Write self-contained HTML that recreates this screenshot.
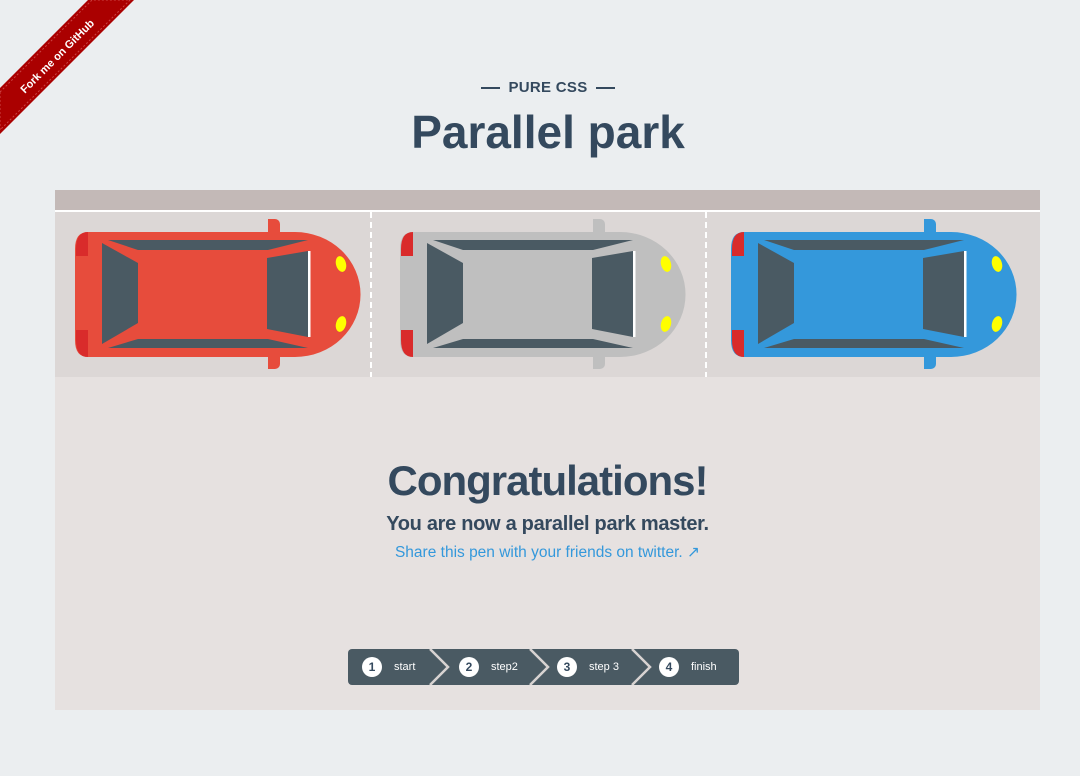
<!DOCTYPE html>
<html><head><meta charset="utf-8"><style>
body{margin:0;width:1080px;height:776px;background:#ebeef0;font-family:"Liberation Sans",sans-serif;position:relative;overflow:hidden}
.sub{position:absolute;top:79px;left:0;width:1096px;text-align:center;color:#34495e;font-weight:bold;font-size:15px;letter-spacing:.3px}
.sub span{display:inline-block;width:19px;height:2px;background:#34495e;vertical-align:middle;margin:0 8px}
h1{position:absolute;top:105px;left:0;width:1096px;text-align:center;margin:0;color:#34495e;font-size:46px;font-weight:bold}
.lot{position:absolute;left:55px;top:190px;width:985px;height:520px;background:#e6e1e0}
.cg{position:absolute;left:0;top:187px;width:985px;text-align:center;color:#34495e}
.steps{position:absolute;left:348px;top:649px;width:391px;height:36px;background:#4a5a63;border-radius:4px}
.st{position:absolute;top:0;height:36px;line-height:36px;color:#fff;font-size:11px}
.st b{display:inline-block;width:20px;height:20px;border-radius:50%;background:#fff;color:#34495e;text-align:center;line-height:20px;font-size:12px;margin-right:12px;vertical-align:middle}
</style></head><body>
<svg style="position:absolute;left:0;top:0" width="140" height="140"><polygon points="0,88 88,0 134,0 0,134" fill="#a00"/><polygon points="0,92 92,0 130,0 0,130" fill="none" stroke="#c44" stroke-dasharray="2 2" stroke-width="1"/><text x="0" y="4" transform="translate(57,56) rotate(-45)" text-anchor="middle" fill="#fff" font-size="11" font-weight="bold" font-family="Liberation Sans">Fork me on GitHub</text></svg>
<div class="sub"><span></span>PURE CSS<span></span></div>
<h1>Parallel park</h1>
<div class="lot">
<svg width="985" height="190" style="position:absolute;left:0;top:0">
<rect width="985" height="20" fill="#c3b9b7"/><rect y="20" width="985" height="2" fill="#fff"/>
<rect y="22" width="985" height="165" fill="#dcd7d6"/>
<line x1="316" y1="22" x2="316" y2="187" stroke="#fff" stroke-width="2" stroke-dasharray="6 4"/>
<line x1="651" y1="22" x2="651" y2="187" stroke="#fff" stroke-width="2" stroke-dasharray="6 4"/>
<defs><g id="car">
<path d="M213,29 h7 a5,5 0 0 1 5,5 v10 h-12z M213,179 h7 a5,5 0 0 0 5,-5 v-10 h-12z" fill="var(--c)"/>
<path d="M33,42 H240 A65,62 0 0 1 240,167 H33 Q20,167 20,150 V59 Q20,42 33,42z" fill="var(--c)"/>
<path d="M33,42 H33 V66 H21 V59 Q21,42 33,42z M21,140 H33 V167 Q21,167 21,150z" fill="#d92b2b"/>
<polygon points="53,50 253,50 213,60 83,60" fill="#4a5a63"/>
<polygon points="53,158 253,158 213,149 83,149" fill="#4a5a63"/>
<polygon points="47,53 83,73 83,133 47,154" fill="#4a5a63"/>
<polygon points="212,68 253,61 253,147 212,139" fill="#4a5a63"/>
<rect x="253" y="61" width="2.5" height="86" fill="#fff"/>
<ellipse cx="286" cy="74" rx="5" ry="8" transform="rotate(-15 286 74)" fill="#ff0"/>
<ellipse cx="286" cy="134" rx="5" ry="8" transform="rotate(15 286 134)" fill="#ff0"/>
</g></defs>
<use href="#car" style="--c:#e74c3c"/>
<use href="#car" x="325" style="--c:#bfbfbf"/>
<use href="#car" x="656" style="--c:#3498db"/>
</svg>
<div class="cg"><div style="margin-top:80px;font-size:42px;font-weight:bold;letter-spacing:-1px">Congratulations!</div>
<div style="font-size:20px;font-weight:bold;margin-top:8px;letter-spacing:-.3px">You are now a parallel park master.</div>
<div style="font-size:15.5px;color:#3498db;margin-top:7px">Share this pen with your friends on twitter. ↗</div></div>
</div>
<div class="steps">
<svg width="391" height="36" style="position:absolute;left:0;top:0"><g fill="none" stroke="#d8d3d2" stroke-width="2.5"><polyline points="82,0 100,18 82,36"/><polyline points="182,0 200,18 182,36"/><polyline points="284,0 302,18 284,36"/></g></svg>
<div class="st" style="left:14px"><b>1</b>start</div>
<div class="st" style="left:111px"><b>2</b>step2</div>
<div class="st" style="left:209px"><b>3</b>step 3</div>
<div class="st" style="left:311px"><b>4</b>finish</div>
</div>
</body></html>
